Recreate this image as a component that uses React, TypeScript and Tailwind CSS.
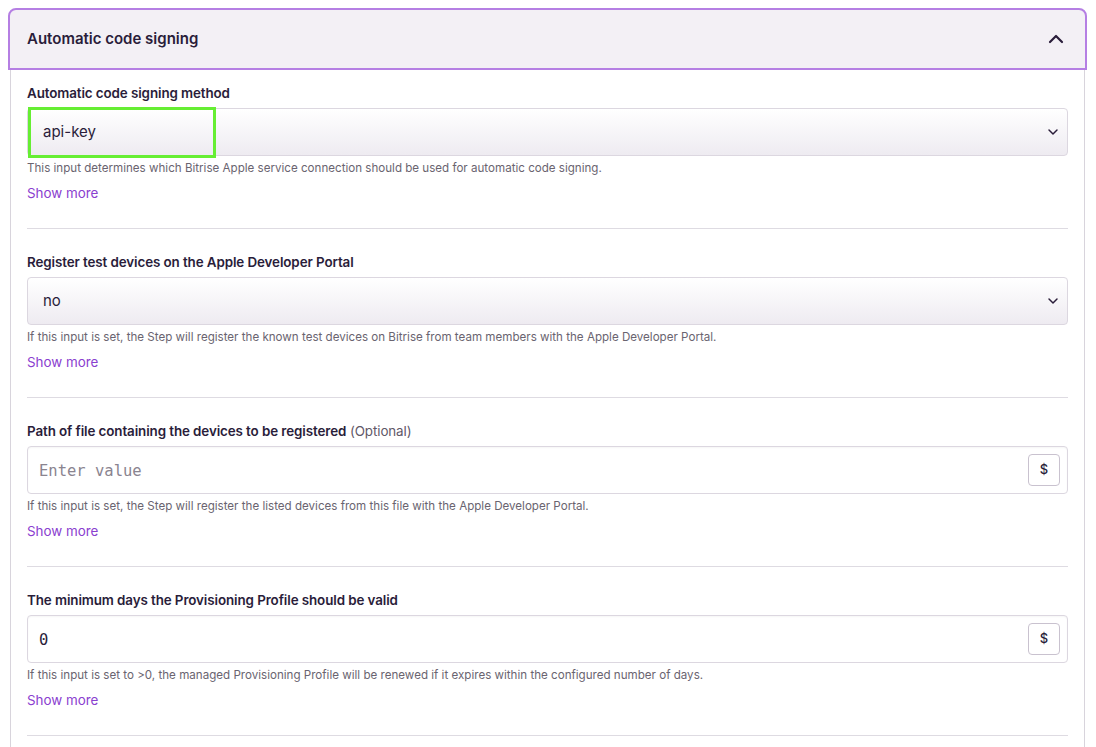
import React from "react";
import { ChevronUp, ChevronDown } from "lucide-react";

const font = { fontFamily: "Inter, 'Noto Sans', sans-serif" };

function Label({ text, optional }: { text: string; optional?: boolean }) {
  return (
    <div className="h-4 leading-4 text-[13.4px] font-semibold text-[#2a1d3a] tracking-[-0.1px]">
      {text}
      {optional && <span className="font-normal text-[#5f5868]"> (Optional)</span>}
    </div>
  );
}

function Help({ text }: { text: string }) {
  return (
    <>
      <div className="mt-1 h-4 leading-4 text-[11.6px] text-[#6a6470]">{text}</div>
      <div className="mt-[7px] h-5 leading-5 text-[13.4px] text-[#8a40cf]">Show more</div>
    </>
  );
}

function Select({ value, highlight }: { value: string; highlight?: boolean }) {
  return (
    <div className="relative mt-[7px] h-12 rounded border border-[#dcd7e0] bg-gradient-to-b from-white to-[#eeebf1] flex items-center pl-[15px] pr-[6px]">
      <span className="flex-1 text-[15px] text-[#2a1d3a]">{value}</span>
      <ChevronDown size={16} strokeWidth={2.2} color="#2a1d3a" />
      {highlight && (
        <div className="absolute left-0 top-[-2px] w-[188px] h-[51px] border-[3px] border-[#66ee33]" />
      )}
    </div>
  );
}

function Input({ value, placeholder }: { value?: string; placeholder?: string }) {
  return (
    <div className="mt-[7px] h-12 rounded border border-[#dcd7e0] bg-white flex items-center pl-[11px] pr-[7px] shadow-[inset_0_1px_2px_rgba(0,0,0,0.04)]">
      <span
        className={"flex-1 pt-[3px] text-[15.5px] " + (value ? "text-[#2a1d3a]" : "text-[#8a8490]")}
        style={{ fontFamily: "'DejaVu Sans Mono', monospace" }}
      >
        {value ?? placeholder}
      </span>
      <div className="w-[32px] h-[32px] rounded border border-[#c9c2cf] bg-white flex items-center justify-center text-[13px] font-medium text-[#2a1d3a]">
        $
      </div>
    </div>
  );
}

export default function App() {
  return (
    <div className="bg-white min-h-[747px] pt-2 pl-2" style={font}>
      <div className="w-[1079px]">
        <div className="h-[62px] rounded-t-lg border-2 border-[#b57fe3] bg-[#f3f0f5] flex items-center justify-between pl-[17px] pr-[17px]">
          <span className="text-[15px] font-semibold text-[#2a1d3a]">Automatic code signing</span>
          <ChevronUp size={24} strokeWidth={2.2} color="#2a1d3a" />
        </div>
        <div className="mx-[2px] border-x border-[#d8d4dc] px-4">
          <div className="pt-[15px] pb-[25px] border-b border-[#dedbe2]">
            <Label text="Automatic code signing method" />
            <Select value="api-key" highlight />
            <Help text="This input determines which Bitrise Apple service connection should be used for automatic code signing." />
          </div>
          <div className="pt-[25px] pb-[25px] border-b border-[#dedbe2]">
            <Label text="Register test devices on the Apple Developer Portal" />
            <Select value="no" />
            <Help text="If this input is set, the Step will register the known test devices on Bitrise from team members with the Apple Developer Portal." />
          </div>
          <div className="pt-[25px] pb-[25px] border-b border-[#dedbe2]">
            <Label text="Path of file containing the devices to be registered" optional />
            <Input placeholder="Enter value" />
            <Help text="If this input is set, the Step will register the listed devices from this file with the Apple Developer Portal." />
          </div>
          <div className="pt-[25px] pb-[25px] border-b border-[#dedbe2]">
            <Label text="The minimum days the Provisioning Profile should be valid" />
            <Input value="0" />
            <Help text="If this input is set to >0, the managed Provisioning Profile will be renewed if it expires within the configured number of days." />
          </div>
          <div className="h-8" />
        </div>
      </div>
    </div>
  );
}
